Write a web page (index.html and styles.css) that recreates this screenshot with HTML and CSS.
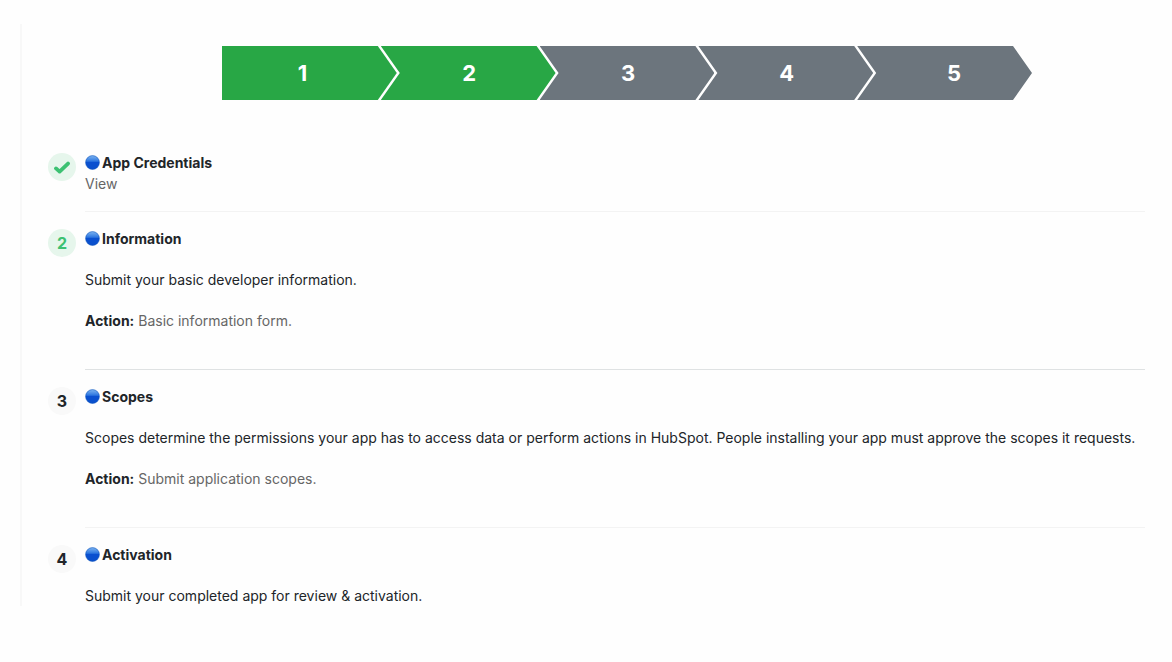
FILE: index.html
```
<!DOCTYPE html>
<html lang="en">
<head>
  <meta charset="UTF-8">
  <meta name="viewport" content="width=device-width, initial-scale=1.0">
  <title>App Setup</title>
  <link rel="stylesheet" href="styles.css">
</head>
<body>
  <!-- Shared blue dot for the task titles -->
  <svg class="defs" width="0" height="0" aria-hidden="true">
    <defs>
      <linearGradient id="dot-fill" x1="0" y1="0" x2="0" y2="1">
        <stop offset="0" stop-color="#7db4f0"/>
        <stop offset="0.4" stop-color="#2f78e0"/>
        <stop offset="0.5" stop-color="#0a50d0"/>
        <stop offset="1" stop-color="#0a50cc"/>
      </linearGradient>
      <symbol id="dot" viewBox="0 0 15 15">
        <circle cx="7.5" cy="7.5" r="6.9" fill="url(#dot-fill)" stroke="#1459bd" stroke-width="0.6"/>
      </symbol>
    </defs>
  </svg>

  <main class="panel">
    <ol class="stepper">
      <li class="step done first">1</li>
      <li class="step done">2</li>
      <li class="step">3</li>
      <li class="step">4</li>
      <li class="step last">5</li>
    </ol>

    <section class="task compact">
      <span class="badge green">
        <svg width="16" height="13" viewBox="0 0 16 13" aria-label="Done">
          <path d="M2 7.4 L5.6 10.6 L14 2.6" fill="none" stroke="#3cc172" stroke-width="3.8" stroke-linejoin="round" stroke-linecap="round"/>
        </svg>
      </span>
      <div class="task-body">
        <h2><svg class="dot"><use href="#dot"/></svg>App Credentials</h2>
        <a href="#credentials">View</a>
      </div>
    </section>

    <section class="task">
      <span class="badge green">2</span>
      <div class="task-body strong-line">
        <h2><svg class="dot"><use href="#dot"/></svg>Information</h2>
        <p>Submit your basic developer information.</p>
        <p><strong>Action:</strong> <a href="#information">Basic information form.</a></p>
      </div>
    </section>

    <section class="task">
      <span class="badge">3</span>
      <div class="task-body">
        <h2><svg class="dot"><use href="#dot"/></svg>Scopes</h2>
        <p>Scopes determine the permissions your app has to access data or perform actions in HubSpot. People installing your app must approve the scopes it requests.</p>
        <p><strong>Action:</strong> <a href="#scopes">Submit application scopes.</a></p>
      </div>
    </section>

    <section class="task">
      <span class="badge">4</span>
      <div class="task-body">
        <h2><svg class="dot"><use href="#dot"/></svg>Activation</h2>
        <p>Submit your completed app for review &amp; activation.</p>
      </div>
    </section>
  </main>
</body>
</html>
```
FILE: styles.css
```
/* General styling */
* {
  box-sizing: border-box;
}

body {
  font-family: 'Inter', sans-serif;
  font-size: 14px;
  line-height: 21px;
  background: #fefefe;
  color: #212529;
  margin: 0;
}

.defs {
  position: absolute;
}

.panel {
  margin: 24px 0 0 20px;
  padding: 22px 27px 0 26px;
  border-left: 2px solid #f8f8f8;
}

/* Chevron steps, each one overlaps the tip of the step before it */
.stepper {
  display: grid;
  grid-template-columns: repeat(5, 1fr);
  list-style: none;
  margin: 0 113px 36px 174px;
  padding: 0 0 0 16px;
}

.step {
  height: 54px;
  margin-left: -16px;
  padding-left: 2px;
  display: flex;
  align-items: center;
  justify-content: center;
  background: #6c757d;
  color: #fff;
  font-size: 22px;
  font-weight: 700;
  clip-path: polygon(0 0, calc(100% - 19px) 0, 100% 50%, calc(100% - 19px) 100%, 0 100%, 19px 50%);
}

.step.done {
  background: #28a745;
}

.step.first {
  padding-right: 16px;
  clip-path: polygon(0 0, calc(100% - 19px) 0, 100% 50%, calc(100% - 19px) 100%, 0 100%);
}

.step.last {
  padding-left: 19px;
}

/* Tasks */
.task {
  display: flex;
  gap: 9px;
  padding-top: 16px;
}

.badge {
  flex: none;
  width: 28px;
  height: 28px;
  margin-top: 1px;
  display: flex;
  align-items: center;
  justify-content: center;
  border-radius: 50%;
  background: #f9f9f9;
  font-size: 16px;
  font-weight: 700;
}

.badge.green {
  background: #e6f6ec;
  color: #3cc172;
}

.task-body {
  flex: 1;
  padding-bottom: 38px;
  border-bottom: 1px solid #f3f3f3;
}

.task-body.strong-line {
  border-color: #dfe2e3;
}

.compact .task-body {
  padding-bottom: 17px;
}

.task:last-child .task-body {
  padding-bottom: 0;
  border-bottom: none;
}

.task h2 {
  display: flex;
  align-items: center;
  gap: 2px;
  margin: 0;
  font-size: 14px;
  font-weight: 700;
}

.dot {
  width: 15px;
  height: 15px;
}

.task p {
  margin: 20px 0 0;
}

.task a {
  color: #666;
  text-decoration: none;
}

.task a:hover {
  text-decoration: underline;
}
```
